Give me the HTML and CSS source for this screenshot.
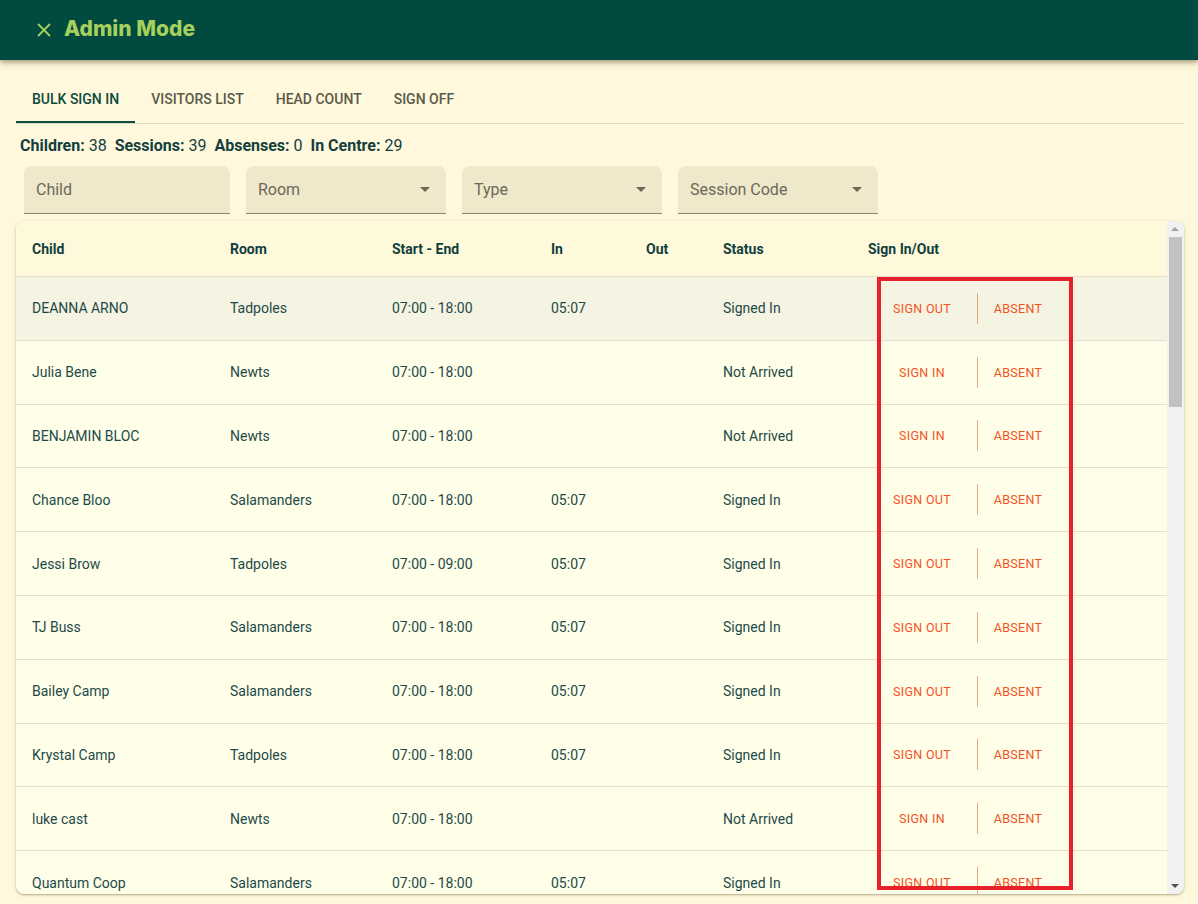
FILE: index.html
```html
<!DOCTYPE html>
<html>
<head>
<meta charset="utf-8">
<link rel="stylesheet" href="styles.css">
</head>
<body>
<header class="topbar">
  <svg class="close-icon" width="16" height="16" viewBox="0 0 16 16"><path d="M2 2 L14 14 M14 2 L2 14" stroke="#a6cf5b" stroke-width="1.8" fill="none"/></svg>
  <span class="title">Admin Mode</span>
</header>
<main class="content">
  <nav class="tabs">
    <div class="tab active">BULK SIGN IN</div>
    <div class="tab">VISITORS LIST</div>
    <div class="tab">HEAD COUNT</div>
    <div class="tab">SIGN OFF</div>
  </nav>
  <div class="stats">
    <b>Children:</b> 38 &nbsp;<b>Sessions:</b> 39 &nbsp;<b>Absenses:</b> 0 &nbsp;<b>In Centre:</b> 29
  </div>
  <div class="filters">
    <div class="field wide"><span>Child</span></div>
    <div class="field"><span>Room</span><i class="caret"></i></div>
    <div class="field"><span>Type</span><i class="caret"></i></div>
    <div class="field"><span>Session Code</span><i class="caret"></i></div>
  </div>
  <section class="card">
    <div class="table">
      <div class="row head">
        <div class="c1">Child</div><div class="c2">Room</div><div class="c3">Start - End</div><div class="c4">In</div><div class="c5">Out</div><div class="c6">Status</div><div class="c7">Sign In/Out</div>
      </div>
      <div class="row hl">
        <div class="c1">DEANNA ARNO</div><div class="c2">Tadpoles</div><div class="c3">07:00 - 18:00</div><div class="c4">05:07</div><div class="c5"></div><div class="c6">Signed In</div>
        <div class="c7 actions"><span class="btn b1">SIGN OUT</span><span class="sep"></span><span class="btn b2">ABSENT</span></div>
      </div>
      <div class="row">
        <div class="c1">Julia Bene</div><div class="c2">Newts</div><div class="c3">07:00 - 18:00</div><div class="c4"></div><div class="c5"></div><div class="c6">Not Arrived</div>
        <div class="c7 actions"><span class="btn b1">SIGN IN</span><span class="sep"></span><span class="btn b2">ABSENT</span></div>
      </div>
      <div class="row">
        <div class="c1">BENJAMIN BLOC</div><div class="c2">Newts</div><div class="c3">07:00 - 18:00</div><div class="c4"></div><div class="c5"></div><div class="c6">Not Arrived</div>
        <div class="c7 actions"><span class="btn b1">SIGN IN</span><span class="sep"></span><span class="btn b2">ABSENT</span></div>
      </div>
      <div class="row">
        <div class="c1">Chance Bloo</div><div class="c2">Salamanders</div><div class="c3">07:00 - 18:00</div><div class="c4">05:07</div><div class="c5"></div><div class="c6">Signed In</div>
        <div class="c7 actions"><span class="btn b1">SIGN OUT</span><span class="sep"></span><span class="btn b2">ABSENT</span></div>
      </div>
      <div class="row">
        <div class="c1">Jessi Brow</div><div class="c2">Tadpoles</div><div class="c3">07:00 - 09:00</div><div class="c4">05:07</div><div class="c5"></div><div class="c6">Signed In</div>
        <div class="c7 actions"><span class="btn b1">SIGN OUT</span><span class="sep"></span><span class="btn b2">ABSENT</span></div>
      </div>
      <div class="row">
        <div class="c1">TJ Buss</div><div class="c2">Salamanders</div><div class="c3">07:00 - 18:00</div><div class="c4">05:07</div><div class="c5"></div><div class="c6">Signed In</div>
        <div class="c7 actions"><span class="btn b1">SIGN OUT</span><span class="sep"></span><span class="btn b2">ABSENT</span></div>
      </div>
      <div class="row">
        <div class="c1">Bailey Camp</div><div class="c2">Salamanders</div><div class="c3">07:00 - 18:00</div><div class="c4">05:07</div><div class="c5"></div><div class="c6">Signed In</div>
        <div class="c7 actions"><span class="btn b1">SIGN OUT</span><span class="sep"></span><span class="btn b2">ABSENT</span></div>
      </div>
      <div class="row">
        <div class="c1">Krystal Camp</div><div class="c2">Tadpoles</div><div class="c3">07:00 - 18:00</div><div class="c4">05:07</div><div class="c5"></div><div class="c6">Signed In</div>
        <div class="c7 actions"><span class="btn b1">SIGN OUT</span><span class="sep"></span><span class="btn b2">ABSENT</span></div>
      </div>
      <div class="row">
        <div class="c1">luke cast</div><div class="c2">Newts</div><div class="c3">07:00 - 18:00</div><div class="c4"></div><div class="c5"></div><div class="c6">Not Arrived</div>
        <div class="c7 actions"><span class="btn b1">SIGN IN</span><span class="sep"></span><span class="btn b2">ABSENT</span></div>
      </div>
      <div class="row">
        <div class="c1">Quantum Coop</div><div class="c2">Salamanders</div><div class="c3">07:00 - 18:00</div><div class="c4">05:07</div><div class="c5"></div><div class="c6">Signed In</div>
        <div class="c7 actions"><span class="btn b1">SIGN OUT</span><span class="sep"></span><span class="btn b2">ABSENT</span></div>
      </div>
    </div>
    <div class="scrollbar">
      <div class="arrow up"></div>
      <div class="thumb"></div>
      <div class="track-rest"></div>
      <div class="arrow down"></div>
    </div>
    <div class="annotation"></div>
  </section>
</main>
</body>
</html>
```
FILE: styles.css
```css
* { box-sizing: border-box; }
html, body { margin: 0; padding: 0; }
body {
  width: 1198px;
  height: 904px;
  overflow: hidden;
  background: #fff8dc;
  font-family: Roboto, "Liberation Sans", sans-serif;
  color: #1d4a48;
}
.topbar {
  height: 60px;
  background: #004a3f;
  display: flex;
  align-items: center;
  padding-left: 36px;
  gap: 12px;
  box-shadow: 0 2px 4px rgba(60, 50, 20, 0.35), 0 4px 8px rgba(60, 50, 20, 0.15);
  position: relative;
  z-index: 2;
}
.close-icon { display: block; }
.title {
  font-family: Inter, "Open Sans", sans-serif;
  font-weight: 800;
  font-size: 21px;
  color: #a6cf5b;
  letter-spacing: 0;
  margin-top: -3px;
}
.content { padding: 15px 14px 0 16px; }
.tabs {
  display: flex;
  height: 49px;
  border-bottom: 1px solid #e0dcc4;
}
.tab {
  padding: 0 16px;
  height: 48px;
  display: flex;
  align-items: center;
  font-size: 14px;
  font-weight: 500;
  color: #5a5a4a;
  letter-spacing: 0;
}
.tab.active {
  color: #0d4a40;
  border-bottom: 2px solid #0d4a40;
  padding-top: 2px;
}
.stats {
  margin-top: 11px;
  padding-left: 4px;
  font-size: 16px;
  height: 21px;
  line-height: 21px;
  color: #123f3d;
}
.stats b { font-weight: 700; }
.filters {
  display: flex;
  gap: 16px;
  padding-left: 8px;
  margin-top: 10px;
}
.field {
  width: 200px;
  height: 48px;
  background: #efe8ca;
  border-radius: 8px 8px 0 0;
  border-bottom: 1px solid #8c8670;
  display: flex;
  align-items: center;
  justify-content: space-between;
  padding: 0 14px 0 12px;
  font-size: 16px;
  color: #6b685a;
}
.field.wide { width: 206px; }
.caret {
  width: 0; height: 0;
  border-left: 5px solid transparent;
  border-right: 5px solid transparent;
  border-top: 5px solid #6b685a;
  margin-right: 2px;
}
.card {
  position: relative;
  margin-top: 7px;
  width: 1168px;
  height: 673px;
  background: #fffee9;
  border-radius: 8px;
  box-shadow: 0 1px 3px rgba(80, 70, 30, 0.35), 0 1px 1px rgba(80,70,30,0.15);
  display: flex;
  overflow: hidden;
}
.table { flex: 1; }
.row {
  display: flex;
  align-items: center;
  height: 63.8px;
  border-bottom: 1px solid #e2dfcf;
  font-size: 14px;
  color: #1d4a48;
  padding-left: 16px;
}
.row.head {
  height: 56px;
  background: #fff9dc;
  font-weight: 700;
  color: #0f3f3c;
}
.row.hl { background: #f5f3e2; }
.c1 { width: 198px; }
.c2 { width: 162px; }
.c3 { width: 159px; }
.c4 { width: 95px; }
.c5 { width: 77px; }
.c6 { width: 145px; }
.c7 { flex: 1; }
.actions {
  display: flex;
  align-items: center;
  padding-left: 9px;
}
.btn {
  font-size: 12.5px;
  font-weight: 400;
  color: #f2531e;
  text-align: center;
  letter-spacing: 0.3px;
}
.b1 { width: 90px; }
.b2 { width: 62px; margin-left: 9px; }
.sep {
  width: 1px;
  height: 31px;
  background: #e9a482;
  margin-left: 10px;
}
.scrollbar {
  width: 17px;
  background: #f1f1f1;
  display: flex;
  flex-direction: column;
  align-items: center;
}
.arrow { height: 16px; width: 17px; position: relative; }
.arrow.up::after, .arrow.down::after {
  content: "";
  position: absolute;
  left: 4px;
  width: 0; height: 0;
  border-left: 4px solid transparent;
  border-right: 4px solid transparent;
}
.arrow.up::after { top: 6px; border-bottom: 4px solid #a3a3a3; }
.arrow.down::after { top: 6px; border-top: 4px solid #505050; }
.thumb {
  width: 13px;
  height: 170px;
  background: #c1c1c1;
}
.track-rest { flex: 1; }
.annotation {
  position: absolute;
  left: 861px;
  top: 56px;
  width: 196px;
  height: 613px;
  border: 4px solid #e8202a;
  pointer-events: none;
}
```
